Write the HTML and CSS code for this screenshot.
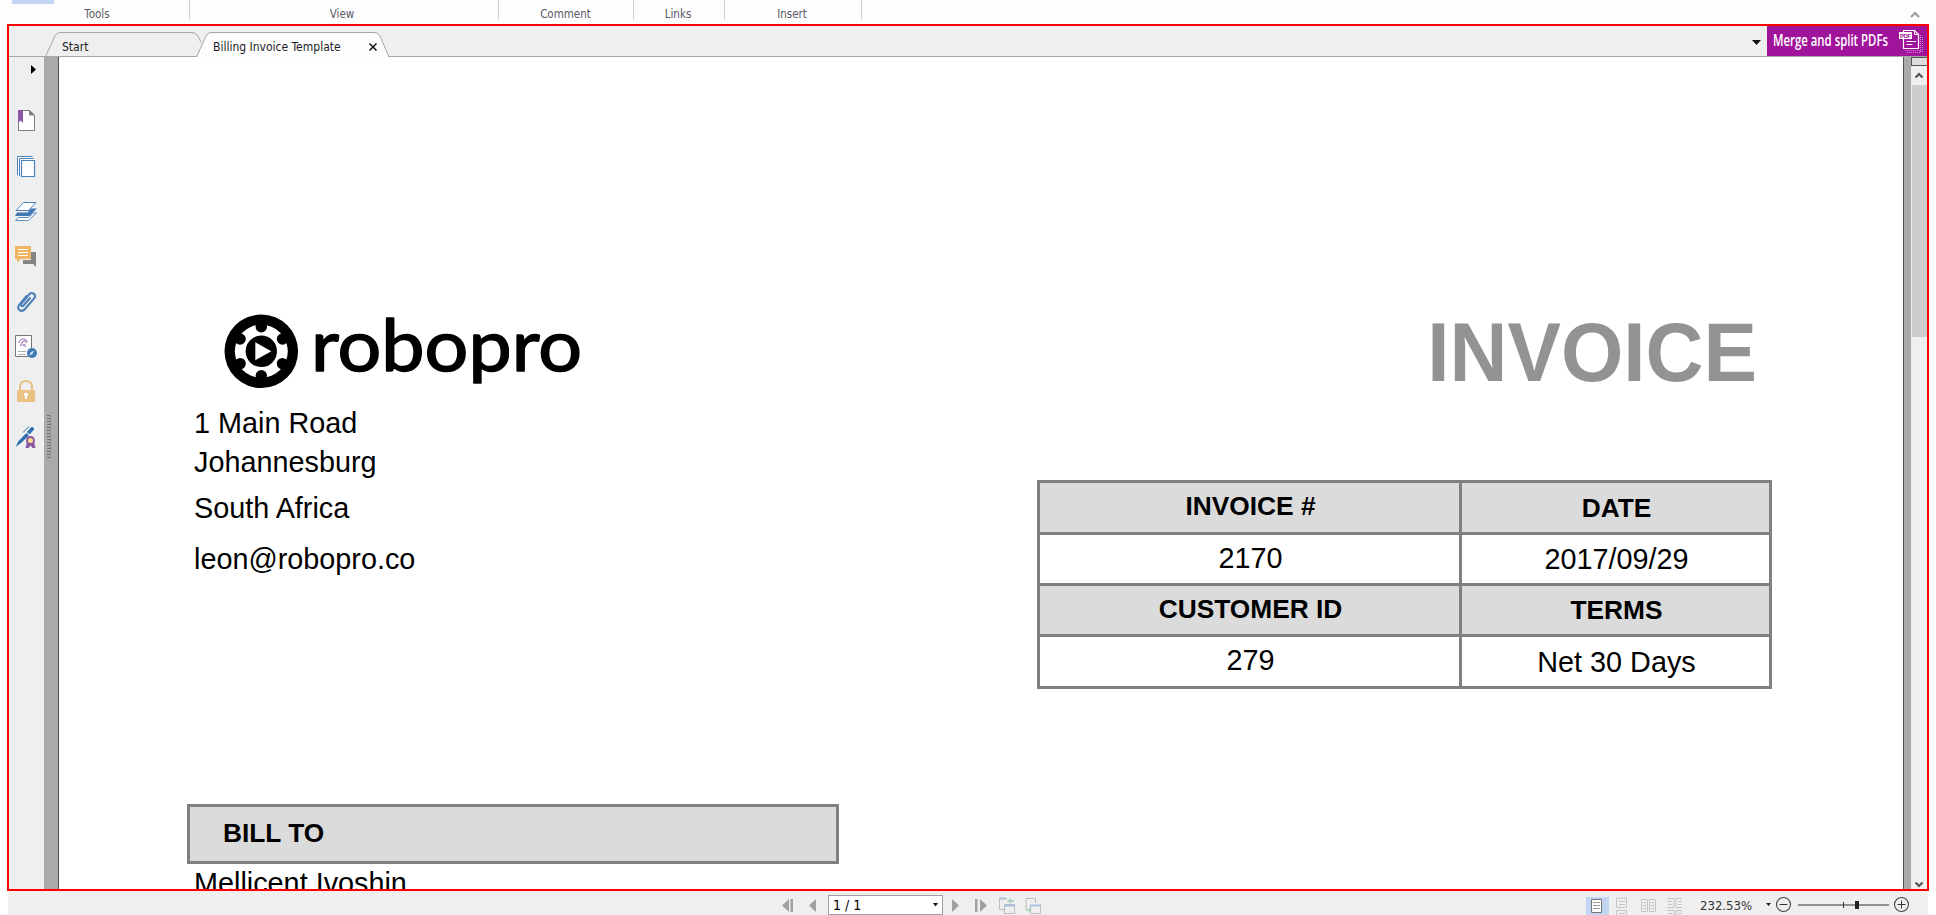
FILE: index.html
```html
<!DOCTYPE html>
<html lang="en">
<head>
<meta charset="utf-8">
<title>Billing Invoice Template</title>
<link rel="stylesheet" href="styles.css">
</head>
<body>
<div class="app">
  <header class="ribbon">
    <div class="group g-tools"><i class="active-tool"></i><span>Tools</span></div>
    <div class="group g-view"><b class="size">Size</b><span>View</span></div>
    <div class="group g-comment"><span>Comment</span></div>
    <div class="group g-links"><span>Links</span></div>
    <div class="group g-insert"><span>Insert</span></div>
    <svg class="collapse" width="10" height="7" viewBox="0 0 10 7"><path d="M1 6l4-4 4 4" fill="none" stroke="#999" stroke-width="2"/></svg>
  </header>

  <main class="frame">
    <nav class="tabs">
      <svg class="tab-shapes" width="400" height="31" viewBox="0 0 400 31">
        <path d="M0 30.5H400" stroke="#a6a6a6"/>
        <path d="M36.5 30.5L46 10Q48 6.500 51 6.500H183Q187 6.500 189.500 11L192 16.500" fill="none" stroke="#a6a6a6"/>
        <path d="M187.500 31L197 10Q199 6.500 202 6.500H365Q369 6.500 371 10L380 31" fill="#fdfdfd" stroke="#a6a6a6"/>
      </svg>
      <span class="tab start">Start</span>
      <span class="tab current">Billing Invoice Template</span>
      <svg class="close" width="8" height="8" viewBox="0 0 8 8"><path d="M.5.5l7 7M7.500.5l-7 7" stroke="#111" stroke-width="1.500"/></svg>
      <svg class="tablist" width="9" height="5" viewBox="0 0 9 5"><path d="M0 0h9L4.500 5z" fill="#111"/></svg>
      <div class="promo">
        <svg width="160" height="30" viewBox="0 0 160 30">
          <text class="promo-text" x="6" y="20" textLength="115" lengthAdjust="spacingAndGlyphs">Merge and split PDFs</text>
          <g fill="none" stroke="#fff">
            <path d="M136.500 6V4.500h11l4 4v14h-15V13" stroke-width="1.200"/>
            <path d="M147.500 4.500v4h4M139.500 15.500h9M139.500 18.500h6M146 15.500h3" />
            <path d="M153.500 9v17.500h-14M155.500 11v15M138.500 24.500h15" stroke="#d58ad4" stroke-dasharray="1 1"/>
          </g>
          <rect x="132" y="6" width="13" height="7" fill="#fff"/>
          <text class="pdf" x="133" y="11.700" textLength="11">PDF</text>
        </svg>
      </div>
    </nav>

    <div class="work">
      <aside class="side">
        <svg class="expand" width="5" height="9" viewBox="0 0 5 9"><path d="M0 0l5 4.500L0 9z" fill="#000"/></svg>
        <svg class="ico" viewBox="0 0 24 24"><path d="M4.500 1.500h11l5 5v15h-16z" fill="#fff" stroke="#808080"/><path d="M15.500 1.500v4.500h5z" fill="#808080" stroke="#808080"/><path d="M4 1h5v13l-2.500-2.500L4 14z" fill="#8b56a3"/></svg>
        <svg class="ico" viewBox="0 0 24 24"><g fill="#fff" stroke="#4a82b8"><path d="M3.500 21V2.500h15M5.500 22V4.500h14"/><path d="M7.500 6.500h13v16h-13z" stroke-width="1.200"/></g></svg>
        <svg class="ico" viewBox="0 0 24 24"><path d="M9.500 3.500h12.500l-7.500 8H2z" fill="#fff" stroke="#4a82b8"/><path d="M3 13.500h10.500l3.500-4h6l-7.500 7.500H1z" fill="#4278b4"/><path d="M4.500 18.500L1.500 21.500h13l8-7.500h-3l-5 4.500z" fill="#fff" stroke="#4a82b8" stroke-width=".9"/></svg>
        <svg class="ico" viewBox="0 0 24 24"><path d="M17 8h5v15l-3-3H9v-4h8z" fill="#858585"/><path d="M1 2h16v13H6.500L3 18.500V15H1z" fill="#f0b663"/><path d="M4 5.500h10M4 8.500h10M4 11.500h10" stroke="#fff"/></svg>
        <svg class="ico" viewBox="0 0 24 24"><path d="M16.500 8.500l-7 8c-1.500 1.500-3.500 0-2-2l8-9.500c2-2.300 7.500 0 5 4l-9.500 11c-3.500 4-9 .5-6-4l8-9.500" fill="none" stroke="#4a7fb8" stroke-width="2"/></svg>
        <svg class="ico" viewBox="0 0 24 24"><path d="M1.500 1.500h16v21h-16z" fill="#fff" stroke="#777"/><path d="M5 9c0-5 8-5 8-1M6 12c2 0 1-5 4-5 3 0 2 2 2 2M9 12c0-3 3-2 2 1" fill="none" stroke="#8b56a3"/><path d="M4 17.500h8M4 20.500h8" stroke="#aaa"/><circle cx="18" cy="19" r="5" fill="#3d7ab5"/><path d="M15.500 21.500l1-3 3.500-2-1.500 3.500z" fill="#dceaf5"/></svg>
        <svg class="ico" viewBox="0 0 24 24"><path d="M6 12V7.500a6 5.500 0 0 1 12 0V12" fill="none" stroke="#e8c283" stroke-width="2"/><rect x="3" y="11" width="18" height="12" rx="1" fill="#e9c182"/><path d="M10 14h4v3h-1v3h-2v-3h-1z" fill="#fff"/></svg>
        <svg class="ico last" viewBox="0 0 24 24"><path d="M1.500 22l3-6 8-8 2.500 2.500-8 7.500z" fill="#2e70b0"/><path d="M13.500 7l4.500-5 2 2-4.500 5zM9 7.500l6-6" stroke="#2e70b0" fill="#2e70b0"/><path d="M13 17l-1.500 6h3l2-2.500 2 2.500h3L20 17z" fill="#8b56a3"/><circle cx="16.500" cy="15.500" r="3.500" fill="#fbdc8c" stroke="#8b56a3" stroke-width="2"/></svg>
      </aside>
      <div class="splitter"><i></i></div>

      <article class="page">
        <section class="top">
          <div class="sender">
            <svg class="logo" width="370" height="82" viewBox="220 310 370 82">
              <circle cx="261.300" cy="351.300" r="36.800"/>
              <circle cx="261.300" cy="351.300" r="26.500" fill="#fff"/>
              <g transform="translate(261.300 351.300)">
                <circle cy="-24.500" r="5.700"/><circle cy="24.500" r="5.700"/>
                <circle cx="21.200" cy="-12.300" r="5.700"/><circle cx="21.200" cy="12.300" r="5.700"/>
                <circle cx="-21.200" cy="-12.300" r="5.700"/><circle cx="-21.200" cy="12.300" r="5.700"/>
                <circle r="15.700"/>
                <path d="M-6-9L10 0-6 9z" fill="#fff"/>
              </g>
              <text class="brand" x="311" y="370.500" textLength="271" lengthAdjust="spacingAndGlyphs">robopro</text>
            </svg>
            <p class="road">1 Main Road</p>
            <p class="city">Johannesburg</p>
            <p class="country">South Africa</p>
            <p class="mail">leon@robopro.co</p>
          </div>
          <div class="summary">
            <h1>INVOICE</h1>
            <div class="grid">
              <div class="head">INVOICE #</div><div class="head low">DATE</div>
              <div>2170</div><div class="low1">2017/09/29</div>
              <div class="head">CUSTOMER ID</div><div class="head low1">TERMS</div>
              <div>279</div><div class="low">Net 30 Days</div>
            </div>
          </div>
        </section>
        <div class="billto">BILL TO</div>
        <p class="client">Mellicent Ivoshin</p>
      </article>

      <div class="gutter"></div>
      <div class="scroll">
        <i class="split"></i>
        <svg class="up" width="16" height="19" viewBox="0 0 16 19"><path d="M4.500 11.500L8 8l3.500 3.500" fill="none" stroke="#555" stroke-width="2.200"/></svg>
        <i class="thumb"></i>
        <svg class="down" width="16" height="12" viewBox="0 0 16 12"><path d="M4.500 5.500L8 9l3.500-3.500" fill="none" stroke="#555" stroke-width="2.200"/></svg>
      </div>
    </div>
  </main>

  <footer class="status">
    <svg class="nav-prev" width="36" height="24" viewBox="0 0 36 24"><path d="M8 8v13l-7-6.500zM9.500 8H12v13H9.500zM35 8v13l-7-6.500z" fill="#a0a0a0"/></svg>
    <div class="pager"><span>1 / 1</span><svg width="5" height="4" viewBox="0 0 5 4"><path d="M0 0h5L2.500 3.500z" fill="#111"/></svg></div>
    <svg class="nav-next" width="92" height="24" viewBox="0 0 92 24">
      <path d="M1 8v13l7-6.500zM24 8h2.500v13H24zM29 8v13l7-6.500z" fill="#a0a0a0"/>
      <g fill="none" stroke="#bdbdbd"><path d="M54 18.500h-5.500v-11H56M53.500 13.500h10v9h-10z"/><path d="M80 7.500h-5v11h5M79.500 22.500h10v-8h-10zM84.500 8v4"/><path d="M75 7.500h9.500V12"/></g>
      <path d="M48 7.500h7M53 14.500h11M79 14.500h11" stroke="#a9c1dc" stroke-width="2"/>
      <path d="M56 10l4-3v2h3v2h-3v2zM81 19l-3-3v2h-3v2h3v2z" fill="#b4d2c5"/>
    </svg>
    <svg class="views" width="98" height="24" viewBox="0 0 98 24">
      <rect y="6" width="23" height="18" fill="#c2d5f2"/>
      <path d="M5.500 8.500h10v13h-10z" fill="#fff" stroke="#777"/><path d="M7 11.500h7M7 14.500h7M7 17.500h7" stroke="#999"/>
      <g fill="none" stroke="#c4c4c4">
        <path d="M30.500 7v9.500h10V7zM30.500 24v-4.500h10V24M33 10.500h6M33 13.500h6M33 22.500h6"/>
        <path d="M55.500 8.500h6v12h-6zM63.500 8.500h6v12h-6zM57 11.500h3M57 14.500h3M57 17.500h3M65 11.500h3M65 14.500h3M65 17.500h3"/>
        <path d="M81 7.500h7v9h-7M96 7.500h-6v9h6M81 19.500h7V24M96 19.500h-6V24M82 10.500h4M82 13.500h4M92 10.500h4M92 13.500h4M82 22.500h4M92 22.500h4"/>
      </g>
    </svg>
    <span class="zoom">232.53%</span>
    <svg class="slider" width="146" height="24" viewBox="0 0 146 24">
      <path d="M1 12h5L3.500 15z" fill="#222"/>
      <g fill="none" stroke="#444" stroke-width="1.100"><circle cx="18.500" cy="13.500" r="7"/><circle cx="136.500" cy="13.500" r="7"/></g>
      <path d="M14.500 13.500h8M132.500 13.500h8M136.500 9.500v8M33 14h91M78.500 11v6" stroke="#333"/>
      <rect x="90" y="10" width="4" height="8" fill="#222"/>
    </svg>
  </footer>
</div>
</body>
</html>
```
FILE: styles.css
```css
* { box-sizing: border-box; }
body { margin: 0; background: #fff; overflow: hidden; font-family: "DejaVu Sans Condensed", "DejaVu Sans", sans-serif; }
p, h1 { margin: 0; }
svg { display: block; flex: none; }
.app { width: 1936px; height: 915px; padding-left: 7px; display: flex; flex-direction: column; }

.ribbon { height: 24px; width: 1922px; display: flex; background: #fdfdfd; position: relative; flex: none; }
.group { height: 20px; border-right: 1px solid #d0d0d0; font-size: 11.500px; line-height: 16px; color: #5a5a66; display: flex; align-items: flex-end; justify-content: center; position: relative; }
.group span { height: 14px; }
.g-tools { width: 183px; padding-right: 2px; }
.g-view { width: 309px; padding-right: 4px; }
.g-comment { width: 135px; padding-right: 1px; }
.g-links { width: 91px; padding-right: 2px; }
.g-insert { width: 137px; padding-right: 2px; }
.active-tool { position: absolute; left: 5px; top: 0; width: 42px; height: 4px; background: #c2d5f2; }
.size { position: absolute; left: 15px; top: -11px; font-weight: normal; color: #222; font-size: 11px; }
.collapse { margin: 11px 9px 0 auto; }

.frame { width: 1922px; height: 867px; border: 2px solid #f00; display: flex; flex-direction: column; flex: none; }
.tabs { height: 31px; background: #efefef; border-bottom: 1px solid #a6a6a6; display: flex; position: relative; font-size: 12px; color: #1c1c28; flex: none; }
.tab-shapes { position: absolute; left: 0; top: 0; }
.tab { position: relative; line-height: 16px; padding-top: 13px; white-space: nowrap; }
.start { margin-left: 53px; width: 151px; }
.current { width: 156px; }
.close { position: relative; margin-top: 17px; }
.tablist { margin: 14px 6px 0 auto; }
.promo { width: 160px; height: 30px; background: #a0149c; }
.promo-text { font: 600 16px "Open Sans", sans-serif; fill: #fff; }
.pdf { font: bold 6px "Liberation Sans", sans-serif; fill: #a0149c; }

.work { flex: 1; min-height: 0; display: flex; background: #fff; }
.side { width: 35px; background: #efefef; padding-left: 5px; display: flex; flex-direction: column; }
.expand { margin: 8px 0 35px 17px; }
.ico { width: 24px; height: 24px; margin-bottom: 21px; }
.ico.last { margin-top: 1px; }
.splitter { width: 15px; background: #a9aaaa; border-right: 1px solid #505050; padding: 358px 0 0 3px; }
.splitter i { display: block; width: 4px; height: 44px; background: repeating-linear-gradient(#707070 0 1px, transparent 1px 3px); border-right: 1px solid #8c8c8c; }
.gutter { width: 8px; background: #a9aaaa; border-left: 1px solid #505050; }
.scroll { width: 16px; background: #f0f0f0; display: flex; flex-direction: column; }
.split { height: 9px; background: #dedede; border: 1px solid #555; border-right: 0; flex: none; }
.thumb { height: 252px; margin-left: 1px; background: #cdcdcd; }
.down { margin-top: auto; }

.page { width: 1844px; height: 832px; overflow: hidden; font-family: "Liberation Sans", Arial, sans-serif; font-size: 28.800px; color: #000; }
.top { display: flex; justify-content: space-between; padding: 253px 130px 0 135px; height: 747px; }
.sender { line-height: 40px; }
.logo { margin: 0 0 11px 26px; }
.brand { font: 400 71px Lato, sans-serif; stroke: #000; stroke-width: 1.500px; stroke-linejoin: round; }
.city { margin-top: -1px; }
.country { padding-top: 6px; }
.mail { padding-top: 11px; }
.summary { width: 736px; }
h1 { font-size: 80.200px; line-height: 90px; text-align: right; color: #939393; padding: 0 16px 0 0; margin-top: -2px; height: 172px; transform: scaleY(1.045); transform-origin: 0 73px; }
.grid { display: grid; width: 735px; grid-template-columns: 419px 307px; grid-template-rows: 49px 48px 48px 49px; gap: 3px; padding: 3px; background: #808080; height: 209px; }
.grid div { background: #fff; text-align: center; line-height: 46px; padding-left: 2px; }
.grid .head { background: #dbdbdb; font-weight: bold; font-size: 26.300px; }
.grid .low { padding-top: 2px; }
.grid .low1 { padding-top: 1px; }
.billto { margin-left: 128px; width: 652px; height: 60px; border: 3px solid #808080; background: #dbdbdb; font-size: 26.300px; font-weight: bold; line-height: 52px; padding-left: 33px; }
.client { line-height: 40px; padding-left: 135px; margin-top: -1px; }

.status { width: 1920px; margin-left: 1px; flex: 1; background: #efefef; display: flex; font-size: 13px; color: #333; }
.nav-prev { margin-left: 773px; }
.pager { margin: 4px 0 0 11px; width: 115px; height: 20px; border: 1px solid #a0a0a0; background: #fff; display: flex; justify-content: space-between; align-items: center; padding: 0 4px; font-size: 14px; color: #000; }
.nav-next { margin-left: 8px; }
.views { margin-left: 543px; }
.zoom { margin: 6px 0 0 16px; width: 65px; line-height: 18px; }
```
